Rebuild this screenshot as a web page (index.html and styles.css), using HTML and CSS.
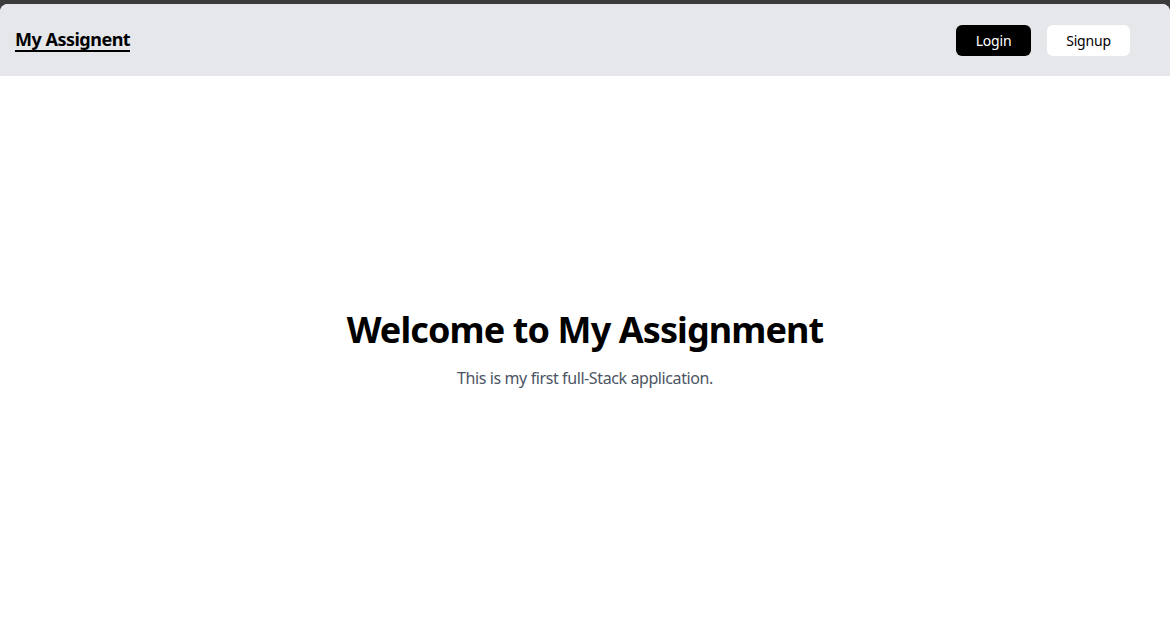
FILE: index.html
```html
<!DOCTYPE html>
<html lang="en">
<head>
<meta charset="utf-8">
<title>My Assignent</title>
<link rel="stylesheet" href="styles.css">
</head>
<body>
<div class="app">
  <header class="navbar">
    <a class="brand" href="#">My Assignent</a>
    <nav class="actions">
      <button class="btn btn-dark">Login</button>
      <button class="btn btn-light">Signup</button>
    </nav>
  </header>
  <main class="hero">
    <h1 class="hero-title">Welcome to My Assignment</h1>
    <p class="hero-sub">This is my first full-Stack application.</p>
  </main>
</div>
</body>
</html>
```

FILE: styles.css
```css
* { box-sizing: border-box; }
html, body { margin: 0; height: 100%; }
body {
  background: #3b3b3b;
  font-family: "Noto Sans", "Open Sans", sans-serif;
  padding-top: 4px;
}
.app {
  background: #ffffff;
  border-radius: 8px 8px 0 0;
  overflow: hidden;
  height: 639px;
  display: flex;
  flex-direction: column;
}
.navbar {
  height: 72px;
  background: #e5e7eb;
  display: flex;
  align-items: center;
  justify-content: space-between;
  padding: 0 40px 0 15px;
}
.brand {
  color: #000;
  text-decoration: none;
  font-weight: 700;
  font-size: 18px;
  letter-spacing: -0.5px;
  line-height: 22px;
  border-bottom: 2px solid #000;
  margin-top: 0;
}
.actions {
  display: flex;
  gap: 16px;
}
.btn {
  font-family: inherit;
  font-size: 14px;
  letter-spacing: -0.2px;
  height: 31px;
  border: none;
  border-radius: 6px;
  cursor: pointer;
}
.btn-dark { background: #000; color: #fff; width: 75px; }
.btn-light { background: #fff; color: #000; width: 83px; }
.hero {
  flex: 1;
  display: flex;
  flex-direction: column;
  align-items: center;
  padding-top: 232px;
}
.hero-title {
  margin: 0;
  font-size: 36px;
  letter-spacing: -0.9px;
  line-height: 44px;
  font-weight: 700;
  color: #000;
}
.hero-sub {
  margin: 14px 0 0;
  font-size: 16px;
  letter-spacing: -0.4px;
  line-height: 24px;
  color: #4b5563;
}
```
